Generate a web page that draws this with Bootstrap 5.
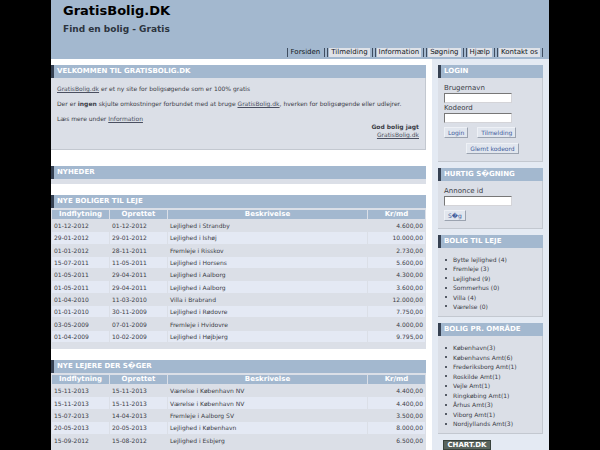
<!DOCTYPE html>
<html lang="da">
<head>
<meta charset="utf-8">
<meta name="viewport" content="width=device-width, initial-scale=1">
<title>GratisBolig.DK</title>
<link href="https://cdn.jsdelivr.net/npm/bootstrap@5.3.0/dist/css/bootstrap.min.css" rel="stylesheet">
<style>
html{background:#000}
body{background:#000;font-family:"DejaVu Sans",Verdana,sans-serif;font-size:6px;line-height:8px;color:#3c4048;height:100vh;overflow:hidden}
.site{width:83%;min-height:100vh;background:#fff}
.site-head{background:#a3b8cf;padding:0 6px 0 12px}
.site-head h1{font-size:13px;line-height:21px;font-weight:700;color:#000}
.site-head h2{font-size:9px;line-height:17px;font-weight:700;color:#2c343e}
.menu{font-size:7px;line-height:9px;padding-top:10px;padding-bottom:2px;gap:2px}
.menu a{color:#14181e;text-decoration:none;border:solid #3f4d60;border-width:0 1px;padding:0 2px 0 1px}
.menu span{display:block;background:#dfe2e8;padding:0 2px}
.menu .current span{background:none}
.main-col{padding:6px 6px 0 0}
.side-col{width:117px;background:#e4eaf3;padding:6px 6px 0}
.panel{background:#dbdfe7;border:solid #c3c8d0;border-width:0 1px 1px 0}
.panel h3{font-size:7px;line-height:13px;font-weight:700;color:#fff;background:#a3b8cf;border-left:3px solid #364152;padding-left:3px;margin:0 -1px 0 0;text-transform:uppercase}
.side-col .panel{margin-bottom:6px}
.main-col .panel{margin-bottom:16px}
.main-col .listing{border-width:0;margin-bottom:11px;padding-bottom:6px}
.main-col .news{border-width:0;margin-bottom:11px;padding-bottom:5px}
.main-col .listing h3,.main-col .news h3{margin-right:0}
.welcome{padding:7px 6px 10px}
.welcome p{margin:0 0 7px}
.welcome a{color:#4a4f60}
.offers{width:100%;border-collapse:separate;border-spacing:1px;table-layout:fixed;margin-top:1px}
.offers.long{height:134px}
.offers.short{height:73px}
.offers th{background:#a3b8cf;color:#fff;font-size:7px;text-align:center;line-height:9px;padding:0}
.offers td{line-height:11px;padding:0 2px}
.offers tbody tr:nth-child(even) td{background:#e4e9f4}
.offers td:last-child{text-align:right}
.date-col,.price-col{width:57px}
.fields{padding:5px 6px 7px}
.fields label{display:block;font-size:7px;line-height:10px}
.fields input{display:block;width:68px;height:10px;font-size:6px;background:#fff;border:1px solid #d4d4d8;border-top-color:#777;border-left-color:#777;padding:0 2px}
.actions{margin-top:4px}
.act{font-size:6px;line-height:9px;color:#3f5c9b;background:#e1e6ee;border:1px solid #eef1f6;border-right-color:#9ba3b0;border-bottom-color:#9ba3b0;padding:0 3px}
.pair{gap:9px;margin-bottom:5px}
.recover{padding-left:5px}
.links{padding:7px 0 0 15px;margin:0 0 5px;display:grid;align-content:space-between;list-style:none}
.links li{line-height:9px;display:flex;align-items:center}
.links li::before{content:"";width:2px;height:2px;background:#555b66;margin-left:-8px;margin-right:6px}
.six{height:63px}.nine{height:92px}
.chart{display:block;width:48px;margin-left:5px;font-size:7px;font-weight:700;color:#fff;background:#59645d;border:1px solid #39423c;line-height:8px;text-align:center;text-decoration:none}
</style>
<script src="https://cdn.jsdelivr.net/npm/bootstrap@5.3.0/dist/js/bootstrap.bundle.min.js"></script>
</head>
<body>
<div class="site mx-auto d-flex flex-column">
<header class="site-head">
<h1 class="m-0">GratisBolig.DK</h1>
<h2 class="m-0">Find en bolig - Gratis</h2>
<nav class="menu d-flex justify-content-end">
<a class="current" href="#"><span>Forsiden</span></a>
<a href="#"><span>Tilmelding</span></a>
<a href="#"><span>Information</span></a>
<a href="#"><span>Søgning</span></a>
<a href="#"><span>Hjælp</span></a>
<a href="#"><span>Kontakt os</span></a>
</nav>
</header>
<div class="d-flex flex-grow-1">
<main class="main-col flex-grow-1">
<section class="panel">
<h3>Velkommen til GratisBolig.dk</h3>
<div class="welcome">
<p><a href="#">GratisBolig.dk</a> er et ny site for boligsøgende som er 100% gratis</p>
<p>Der er <b>ingen</b> skjulte omkostninger forbundet med at bruge <a href="#">GratisBolig.dk</a>, hverken for boligsøgende eller udlejrer.</p>
<p class="m-0">Læs mere under <a href="#">Information</a></p>
<div class="text-end"><b>God bolig jagt</b><br><a href="#">GratisBolig.dk</a></div>
</div>
</section>
<section class="panel news"><h3>Nyheder</h3></section>
<section class="panel listing">
<h3>Nye boliger til leje</h3>
<table class="offers long">
<colgroup><col class="date-col"><col class="date-col"><col><col class="price-col"></colgroup>
<thead><tr><th>Indflytning</th><th>Oprettet</th><th>Beskrivelse</th><th>Kr/md</th></tr></thead>
<tbody>
<tr><td>01-12-2012</td><td>01-12-2012</td><td>Lejlighed i Strandby</td><td>4.600,00</td></tr>
<tr><td>29-01-2012</td><td>29-01-2012</td><td>Lejlighed i Ishøj</td><td>10.000,00</td></tr>
<tr><td>01-01-2012</td><td>28-11-2011</td><td>Fremleje i Risskov</td><td>2.730,00</td></tr>
<tr><td>15-07-2011</td><td>11-05-2011</td><td>Lejlighed i Horsens</td><td>5.600,00</td></tr>
<tr><td>01-05-2011</td><td>29-04-2011</td><td>Lejlighed i Aalborg</td><td>4.300,00</td></tr>
<tr><td>01-05-2011</td><td>29-04-2011</td><td>Lejlighed i Aalborg</td><td>3.600,00</td></tr>
<tr><td>01-04-2010</td><td>11-03-2010</td><td>Villa i Brabrand</td><td>12.000,00</td></tr>
<tr><td>01-01-2010</td><td>30-11-2009</td><td>Lejlighed i Rødovre</td><td>7.750,00</td></tr>
<tr><td>03-05-2009</td><td>07-01-2009</td><td>Fremleje i Hvidovre</td><td>4.000,00</td></tr>
<tr><td>01-04-2009</td><td>10-02-2009</td><td>Lejlighed i Højbjerg</td><td>9.795,00</td></tr>
</tbody>
</table>
</section>
<section class="panel listing">
<h3>Nye lejere der s�ger</h3>
<table class="offers short">
<colgroup><col class="date-col"><col class="date-col"><col><col class="price-col"></colgroup>
<thead><tr><th>Indflytning</th><th>Oprettet</th><th>Beskrivelse</th><th>Kr/md</th></tr></thead>
<tbody>
<tr><td>15-11-2013</td><td>15-11-2013</td><td>Værelse i København NV</td><td>4.400,00</td></tr>
<tr><td>15-11-2013</td><td>15-11-2013</td><td>Værelse i København NV</td><td>4.400,00</td></tr>
<tr><td>15-07-2013</td><td>14-04-2013</td><td>Fremleje i Aalborg SV</td><td>3.500,00</td></tr>
<tr><td>20-05-2013</td><td>20-05-2013</td><td>Lejlighed i København</td><td>8.000,00</td></tr>
<tr><td>15-09-2012</td><td>15-08-2012</td><td>Lejlighed i Esbjerg</td><td>6.500,00</td></tr>
</tbody>
</table>
</section>
</main>
<aside class="side-col flex-shrink-0">
<section class="panel">
<h3>Login</h3>
<form class="fields">
<label for="user">Brugernavn</label><input id="user" type="text">
<label for="pass">Kodeord</label><input id="pass" type="password">
<div class="actions">
<div class="pair d-flex">
<button class="act" type="button">Login</button>
<button class="act" type="button">Tilmelding</button>
</div>
<div class="recover d-flex justify-content-center">
<button class="act" type="button">Glemt kodeord</button>
</div>
</div>
</form>
</section>
<section class="panel">
<h3>Hurtig s�gning</h3>
<form class="fields">
<label for="ad">Annonce id</label><input id="ad" type="text">
<div class="actions d-flex"><button class="act" type="button">S�g</button></div>
</form>
</section>
<section class="panel">
<h3>Bolig til leje</h3>
<ul class="links six">
<li>Bytte lejlighed (4)</li><li>Fremleje (3)</li><li>Lejlighed (9)</li><li>Sommerhus (0)</li><li>Villa (4)</li><li>Værelse (0)</li>
</ul>
</section>
<section class="panel">
<h3>Bolig pr. område</h3>
<ul class="links nine">
<li>København(3)</li><li>Københavns Amt(6)</li><li>Frederiksborg Amt(1)</li><li>Roskilde Amt(1)</li><li>Vejle Amt(1)</li><li>Ringkøbing Amt(1)</li><li>Århus Amt(3)</li><li>Viborg Amt(1)</li><li>Nordjyllands Amt(3)</li>
</ul>
</section>
<a class="chart" href="#">CHART.DK</a>
</aside>
</div>
</div>
</body>
</html>
